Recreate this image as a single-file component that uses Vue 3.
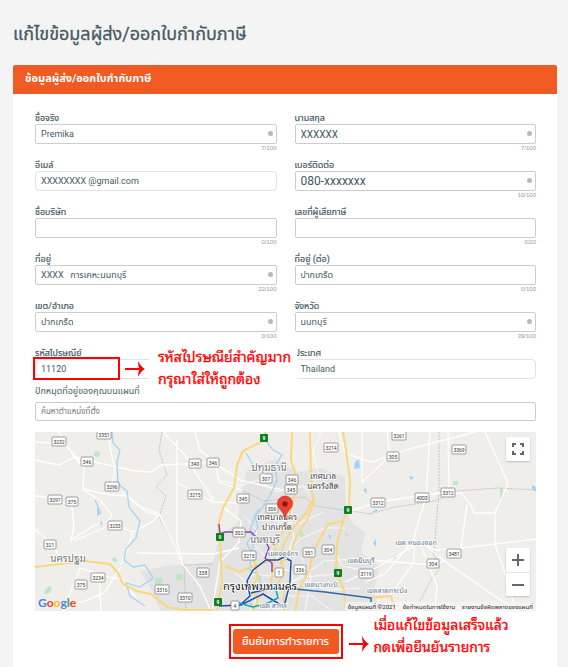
<script setup>
import { ref } from 'vue'

const fields = ref([
  { id: 'first', label: 'ชื่อจริง', value: 'Premika', count: '7/100', dot: true },
  { id: 'last', label: 'นามสกุล', value: 'XXXXXX', count: '7/100', dot: true, size: 'mid' },
  { id: 'email', label: 'อีเมล์', value: 'XXXXXXXX @gmail.com', soft: true },
  { id: 'phone', label: 'เบอร์ติดต่อ', value: '080-xxxxxxx', count: '10/100', dot: true, size: 'big' },
  { id: 'company', label: 'ชื่อบริษัท', value: '', count: '0/100' },
  { id: 'tax', label: 'เลขที่ผู้เสียภาษี', value: '', count: '0/20' },
  { id: 'addr1', label: 'ที่อยู่', value: 'XXXX   การเคหะนนทบุรี', count: '22/100', dot: true },
  { id: 'addr2', label: 'ที่อยู่ (ต่อ)', value: 'ปากเกร็ด', count: '0/100' },
  { id: 'district', label: 'เขต/อำเภอ', value: 'ปากเกร็ด', count: '0/100', dot: true },
  { id: 'province', label: 'จังหวัด', value: 'นนทบุรี', count: '39/100', dot: true },
  { id: 'zip', label: 'รหัสไปรษณีย์', value: '11120', soft: true, note: true },
  { id: 'country', label: 'ประเทศ', value: 'Thailand', soft: true },
])
const search = ref('')

const shields = [
  ['3232', 24, 9], ['3351', 69, 2], ['346', 52, 29], ['3296', 77, 54], ['340', 160, 31],
  ['3215', 160, 62], ['3297', 20, 67], ['375', 37, 69], ['3233', 80, 93], ['321', 15, 112],
  ['3234', 63, 145], ['375', 46, 152], ['338', 168, 140], ['3316', 127, 157], ['3310', 150, 165],
  ['346', 178, 30], ['307', 231, 46], ['346', 257, 47], ['345', 256, 57], ['3214', 296, 15],
  ['345', 208, 66], ['306', 237, 76], ['302', 204, 100], ['3215', 214, 123], ['351', 274, 120],
  ['304', 293, 117], ['336', 265, 137], ['3119', 331, 141], ['1', 244, 140], ['4', 200, 173],
  ['3312', 343, 70], ['3261', 364, 3], ['305', 358, 24], ['3369', 424, 17], ['3312', 413, 60],
  ['4003', 387, 65], ['3481', 419, 121], ['304', 398, 131],
].map(([text, x, y]) => ({ text, x, y, w: text.length * 2 + 6 }))

const motorways = [[229, 6], [313, 78], [185, 105], [303, 141], [183, 170]]

const places = [
  ['นครปฐม', 33, 130, 'mid'], ['ปทุมธานี', 234, 39, 'mid'], ['เทศบาล', 288, 47, 'town'],
  ['นครรังสิต', 288, 57, 'town'], ['เทศบาลนคร', 242, 88, 'town'], ['ปากเกร็ด', 242, 98, 'town'],
  ['นนทบุรี', 230, 111, 'mid'], ['เขตจตุจักร', 248, 124, 'dist'], ['เขตมีนบุรี', 326, 131, 'dist'],
  ['เขตบางกะปิ', 286, 155, 'dist'], ['กรุงเทพมหานคร', 225, 158, 'city'], ['เขต สาทร', 238, 176, 'dist'],
  ['เขต หนองจอก', 381, 113, 'dist'], ['เขตลาดกระบัง', 352, 161, 'dist'],
]
</script>

<template>
  <main class="page">
    <h1>แก้ไขข้อมูลผู้ส่ง/ออกใบกำกับภาษี</h1>
    <form class="card" @submit.prevent>
      <h2>ข้อมูลผู้ส่ง/ออกใบกำกับภาษี</h2>
      <div class="body">
        <div class="grid">
          <div v-for="f in fields" :key="f.id" class="field">
            <label :for="f.id">{{ f.label }}</label>
            <div class="box">
              <input :id="f.id" v-model="f.value" type="text" :class="[f.size, { soft: f.soft }]">
              <span v-if="f.dot" class="dot"></span>
              <template v-if="f.note">
                <div class="note zip-note">
                  <svg class="arrow" viewBox="0 0 20 16"><path d="M0 7H14Q13 4 13 0Q16 6 20 8Q16 10 13 16Q13 12 14 9H0Z" /></svg>
                  <p>รหัสไปรษณีย์สำคัญมาก<br>กรุณาใส่ให้ถูกต้อง</p>
                </div>
                <div class="frame"></div>
              </template>
            </div>
            <span class="count">{{ f.count }}</span>
          </div>
        </div>

        <label class="pin-label" for="search">ปักหมุดที่อยู่ของคุณบนแผนที่</label>
        <input id="search" v-model="search" class="search" type="text" placeholder="ค้นหาตำแหน่งที่ตั้ง">

        <div class="map">
          <svg class="canvas" viewBox="0 0 501 179" preserveAspectRatio="xMidYMid slice">
            <rect width="501" height="179" fill="#f0eeea" />
            <path class="urban" d="M150 179V134L178 130L184 105L203 90L205 66L212 38L240 27L262 40L285 36L310 45L311 78L318 92L330 100L326 120L345 135L338 160L345 179Z" />
            <path class="urban" d="M105 140L130 134L165 132L200 140L195 179H125L118 160Z" />
            <g class="park">
              <circle cx="62" cy="22" r="3" /><rect x="120" y="146" width="8" height="7" rx="2" /><rect x="141" y="142" width="7" height="6" />
              <path d="M10 158l4-4 3 2-2 5-6 1zM76 127l4-2 3 4-4 1zM418 49h5v4h-5zM465 56h3v10h-3zM356 126l5-3 1 4zM397 120l4-2-2 5z" />
              <path d="M265 97l4 4-1 6-3-3zM309 101l5 1-2 3zM287 131l4-2 1 4z" />
            </g>
            <g class="border">
              <path d="M127 0L124 18L132 43L121 55L131 64L124 85L138 110L149 133L151 179" />
              <path d="M404 0V61L401 95L399 122L405 137L397 146L384 171M335 82L360 75L400 69L422 59L463 56L501 58M149 133L178 132" />
              <path d="M205 57L228 69L270 65L280 74L310 78L335 82" />
            </g>
            <g class="road">
              <path d="M0 28L24 33L40 25L55 29L100 39L116 40L126 33L150 32L178 30L205 48L230 54L260 61" />
              <path d="M24 0L35 18L49 35L48 57L70 62L92 64L102 73L124 82L138 110L148 133L165 154L176 179" />
              <path d="M0 64L20 66L37 75L39 95L36 108L58 94L72 90L77 83L65 68L48 58M0 97L15 110L30 133" />
              <path d="M72 0L80 39L77 54L95 66L112 80L124 84M80 93L98 100L91 121L85 134M98 100L117 90L124 83M39 109L71 95" />
              <path d="M128 0L149 22L178 68M142 8V111L148 133M143 51L178 70L205 71M102 121L178 122L204 116" />
              <path d="M47 34L30 12L0 10M28 179L45 136L64 142L66 179M86 135L69 161L45 171M60 143L88 147L100 165" />
              <path d="M160 0L165 18L180 30L184 50L207 58M188 75L206 89L204 110L185 130L177 179" />
              <path d="M304 0L310 21L336 30L378 16L440 0M327 0V50L355 24L352 0M395 0L391 65L379 105L379 130L355 164M413 0L414 60" />
              <path d="M450 0L473 51L460 81L460 113L475 155L480 179M313 80L343 70L411 60L426 61L435 72L439 81L460 81M432 72L426 116L400 118L386 110L343 135L310 150" />
              <path d="M426 116L501 107M386 110L408 128L458 163L484 179M384 109L402 154L400 179M335 128L398 133L411 128M375 112L350 142L330 150" />
            </g>
            <g class="street">
              <path d="M186 48L205 54L223 48L241 60L269 54L275 64M209 84L222 99L219 112L232 127L246 126L267 106L290 96L310 96M202 157L218 142L234 144L252 138L270 145L301 142" />
              <path d="M200 141L218 155L246 156L266 146L290 158L325 156M215 179L225 160L242 154L253 164L278 164L296 179M191 151L207 153L217 166M286 0L278 20L284 44L273 59" />
              <path d="M260 64L255 90L259 104L253 121L258 147L248 179M231 86L247 91L264 91L289 80M297 113L307 134L327 138M250 154L290 129L335 126M266 125L276 145L270 179" />
            </g>
            <g class="river">
              <path d="M77 0L78 11L85 18L82 30L83 52L92 59L94 75L105 89L101 106L91 117L89 128L98 135L110 133L118 146L105 155L91 151L95 164L110 174" />
              <path d="M229 6L237 17L247 23L240 34L242 48L235 64L226 77L220 85L223 95L212 111L216 121L215 138L225 144L225 160L215 169L219 179" />
              <path d="M224 77L220 83L215 99L220 109L216 120M60 68L66 82M220 36L211 21" />
            </g>
            <g class="pond"><path d="M62 74l3 8-3 2zM320 30l4-3 1 9-6 1zM328 58l3-2 1 6zM336 81l5-4 2 2zM338 111l3-4v8zM497 53l4 2v5l-4-3zM66 89l2 3-3 1zM374 44l5 1-3 3zM293 102l3 2-1 4z" /></g>
            <g class="highway">
              <path d="M0 135L25 132L50 129L75 132L83 141L88 152L101 159L116 162L132 175L150 178H178" />
              <path d="M231 0L226 10L208 19L202 33L199 56L188 76L183 94L185 108L187 148L182 179" />
              <path d="M257 0L256 28L263 50L258 71L253 88L248 99L240 114L239 131L236 151L225 164L218 179" />
              <path d="M275 0L276 45L278 68L270 82L259 95L250 109L245 125L249 140L242 154" />
              <path d="M308 0L312 25L315 48L314 76L308 89L293 92L286 105L278 119L275 136L264 158L260 179" />
              <path d="M280 68L272 88L261 105L255 123L245 132M308 90L302 111L301 140L309 158L311 179M190 134L204 140L225 132L238 128" />
              <path d="M217 121L223 145L217 156L223 170M242 151L249 159L249 179M332 166L356 164L360 179" />
            </g>
            <g class="rail">
              <path class="purple" d="M184 92L185 102L190 100H216L222 106L230 108L234 116L230 126L237 131V140" />
              <path class="blue" d="M205 173L215 164L212 149L218 138L231 128H243L249 125L256 129L255 151L249 175L228 162L206 173L184 174" />
              <path class="blue" d="M216 161L233 157L247 156" />
              <path class="teal" d="M204 171L218 175L233 171L243 166L240 154" />
              <path class="navy" d="M250 156L290 160L336 166V170" />
            </g>
            <g v-for="(s, i) in shields" :key="i">
              <rect class="shield" :x="s.x - s.w / 2" :y="s.y - 4" :width="s.w" height="9" rx="1" />
              <text class="num" :x="s.x" :y="s.y + 3">{{ s.text }}</text>
            </g>
            <text v-for="p in places" :key="p[0] + p[1]" :x="p[1]" :y="p[2]" :class="['place', p[3]]">{{ p[0] }}</text>
            <g v-for="m in motorways" :key="m[0]">
              <rect :x="m[0] - 4" :y="m[1] - 4" width="8" height="8" rx="1" fill="#0b8020" />
              <text class="num white" :x="m[0]" :y="m[1] + 2">9</text>
            </g>
            <path d="M250 87C249 79 242.500 77 242.500 71.500A7.500 7.500 0 0 1 257.500 71.500C257.500 77 251 79 250 87Z" fill="#ea4335" stroke="#c5221f" stroke-width=".6" />
            <circle cx="250" cy="72" r="2.700" fill="#8b1712" />
          </svg>
          <div class="google"><span class="b">G</span><span class="r">o</span><span class="y">o</span><span class="b">g</span><span class="g">l</span><span class="r">e</span></div>
          <div class="legal"><span>ข้อมูลแผนที่ ©2021</span><a href="#terms">ข้อกำหนดในการใช้งาน</a><a href="#report">รายงานข้อผิดพลาดของแผนที่</a></div>
          <button class="ctl full" type="button" aria-label="Fullscreen">
            <svg viewBox="0 0 24 24"><path d="M7 10V7h3M14 7h3v3M17 14v3h-3M10 17H7v-3" /></svg>
          </button>
          <div class="ctl zoom">
            <button type="button" aria-label="Zoom in"><svg viewBox="0 0 24 24"><path d="M6 12H18M12 6V18" /></svg></button>
            <button type="button" aria-label="Zoom out"><svg viewBox="0 0 24 24"><path d="M6 12H18" /></svg></button>
          </div>
        </div>

        <div class="actions">
          <div class="submit-frame">
            <button class="submit" type="submit">ยืนยันการทำรายการ</button>
            <div class="note submit-note">
              <svg class="arrow" viewBox="0 0 20 16"><path d="M0 7H14Q13 4 13 0Q16 6 20 8Q16 10 13 16Q13 12 14 9H0Z" /></svg>
              <p>เมื่อแก้ไขข้อมูลเสร็จแล้ว<br>กดเพื่อยืนยันรายการ</p>
            </div>
          </div>
        </div>
      </div>
    </form>
  </main>
</template>

<style>
body { background: #f4f4f4; }
</style>

<style scoped>
* { box-sizing: border-box; }
.page {
  display: flex;
  flex-direction: column;
  min-height: 100vh;
  padding: 0 11px 0 13px;
  color: #455a64;
  font-family: Roboto, "Noto Sans Thai", sans-serif;
  font-size: 9px;
}
h1 { margin: 0; padding: 19px 0 16px; font-size: 18px; line-height: 30px; font-weight: 400; white-space: nowrap; -webkit-text-stroke: .3px #455a64; }
.card { flex: 1 0 auto; background: #fff; border-radius: 2px 2px 0 0; }
h2 {
  margin: 0; padding: 0 12px; height: 29px; line-height: 28px;
  background: #f15a22; color: #fff; font-size: 11px; border-radius: 2px 2px 0 0;
}
.body { padding: 17px 21px 0 22px; }
.grid { display: grid; grid-template-columns: 1fr 1fr; column-gap: 18px; padding-bottom: 12px; }
.field { display: flex; flex-direction: column; height: 47px; }
label { height: 13px; line-height: 14px; white-space: nowrap; -webkit-text-stroke: .2px #455a64; }
.box { position: relative; display: flex; }
input {
  width: 100%; height: 20px; padding: 0 5px; margin: 0;
  border: 1px solid #ccc; border-radius: 2px; background: #fff; outline: none;
  color: #455a64; font-family: inherit; font-size: 9px;
}
input.soft { border-color: #e2e2e2; border-radius: 4px; }
input.mid { font-size: 10px; }
input.big { font-size: 12px; }
.dot { position: absolute; right: 4px; top: 7px; width: 5px; height: 5px; border-radius: 3px; background: #b8b8b8; }
.count { align-self: flex-end; height: 8px; line-height: 8px; font-family: "Liberation Sans", sans-serif; font-size: 6px; color: #999; }
.note { position: absolute; display: flex; color: #f00; z-index: 1; font-family: "Noto Sans Thai Looped", "Noto Looped Thai", Loma, Waree, Garuda, Umpush, "Tlwg Typo", "Noto Serif Thai", "Noto Sans Thai", sans-serif; }
.note p { margin: 0; font-size: 14px; line-height: 22px; white-space: nowrap; -webkit-text-stroke: .3px #f00; }
.arrow { width: 20px; height: 16px; fill: #f00; flex: none; }
.zip-note { left: 114px; top: -14px; width: 148px; height: 44px; background: #fff; }
.zip-note .arrow { margin: 16px 0 0 -24px; }
.zip-note p { padding-left: 13px; }
.frame { position: absolute; left: -2px; top: -2px; width: 87px; height: 23px; border: 2px solid #f00; }
.pin-label { display: block; height: 18px; margin-top: -21px; -webkit-text-stroke: 0; }
.search { display: block; height: 19px; font-size: 8px; }
.search::placeholder { color: #777; }
.map { position: relative; height: 179px; margin-top: 11px; overflow: hidden; }
.canvas { display: block; width: 100%; height: 100%; }
.urban { fill: #e3e3e4; }
.park { fill: #bfe6c5; }
.border { fill: none; stroke: #b9b9b9; stroke-dasharray: 2 1; stroke-width: .8; }
.road { fill: none; stroke: #fff; stroke-width: 1.300; }
.street { fill: none; stroke: #fff; stroke-width: .8; }
.river { fill: none; stroke: #a6d3f2; stroke-width: 1.300; }
.pond { fill: #9fd3f8; }
.highway { fill: none; stroke: #f9d77e; stroke-width: 2; stroke-linejoin: round; }
.rail { fill: none; stroke-width: 1.500; stroke-linejoin: round; }
.purple { stroke: #9048a8; }
.blue { stroke: #1e4fb0; }
.teal { stroke: #18a8a8; }
.navy { stroke: #2d6aa8; }
.place { text-anchor: middle; font-family: "Noto Sans Thai Looped", Loma, Waree, Garuda, Umpush, "Noto Sans Thai", sans-serif; stroke: #fff; stroke-width: 1.500; paint-order: stroke; }
.place.mid { font-size: 10px; fill: #777; }
.town { font-size: 8px; fill: #444; }
.dist { font-size: 7px; fill: #6c7c91; }
.city { font-size: 11px; fill: #222; }
.shield { fill: #fff; stroke: #777; stroke-width: .7; }
.num { font-size: 5px; text-anchor: middle; fill: #333; }
.num.white { fill: #fff; font-weight: 700; }
.google { position: absolute; left: 3px; bottom: 0; font-family: Lato, sans-serif; font-size: 12px; line-height: 16px; font-weight: 700; }
.b { color: #4285f4; } .r { color: #ea4335; } .y { color: #fbbc05; } .g { color: #34a853; }
.legal { position: absolute; right: 0; bottom: 0; display: flex; gap: 7px; padding: 0 3px; height: 9px; line-height: 9px; font-size: 6px; background: #f5f5f3b0; white-space: nowrap; }
.legal, .legal a { color: #222; text-decoration: none; }
button { border: 0; padding: 0; font-family: inherit; }
.ctl { position: absolute; right: 6px; width: 24px; background: #fff; border-radius: 1px; box-shadow: 0 1px 2px #0003; }
.ctl button { display: block; width: 24px; height: 24px; background: none; }
.ctl button + button { border-top: 1px solid #e6e6e6; }
.ctl svg { display: block; width: 24px; height: 24px; fill: none; stroke: #666; stroke-width: 2; }
.full { top: 5px; height: 24px; }
.zoom { bottom: 15px; }
.actions { display: flex; justify-content: center; padding: 13px 0 8px; }
.submit-frame { position: relative; border: 2px solid #f00; padding: 3px 2px; }
.submit { display: block; width: 106px; height: 25px; border-radius: 3px; background: #f15a22; color: #fff; font-size: 11px; white-space: nowrap; -webkit-text-stroke: .2px #fff; }
.submit-note { left: 118px; top: -13px; gap: 5px; }
.submit-note .arrow { margin-top: 23px; }
</style>
